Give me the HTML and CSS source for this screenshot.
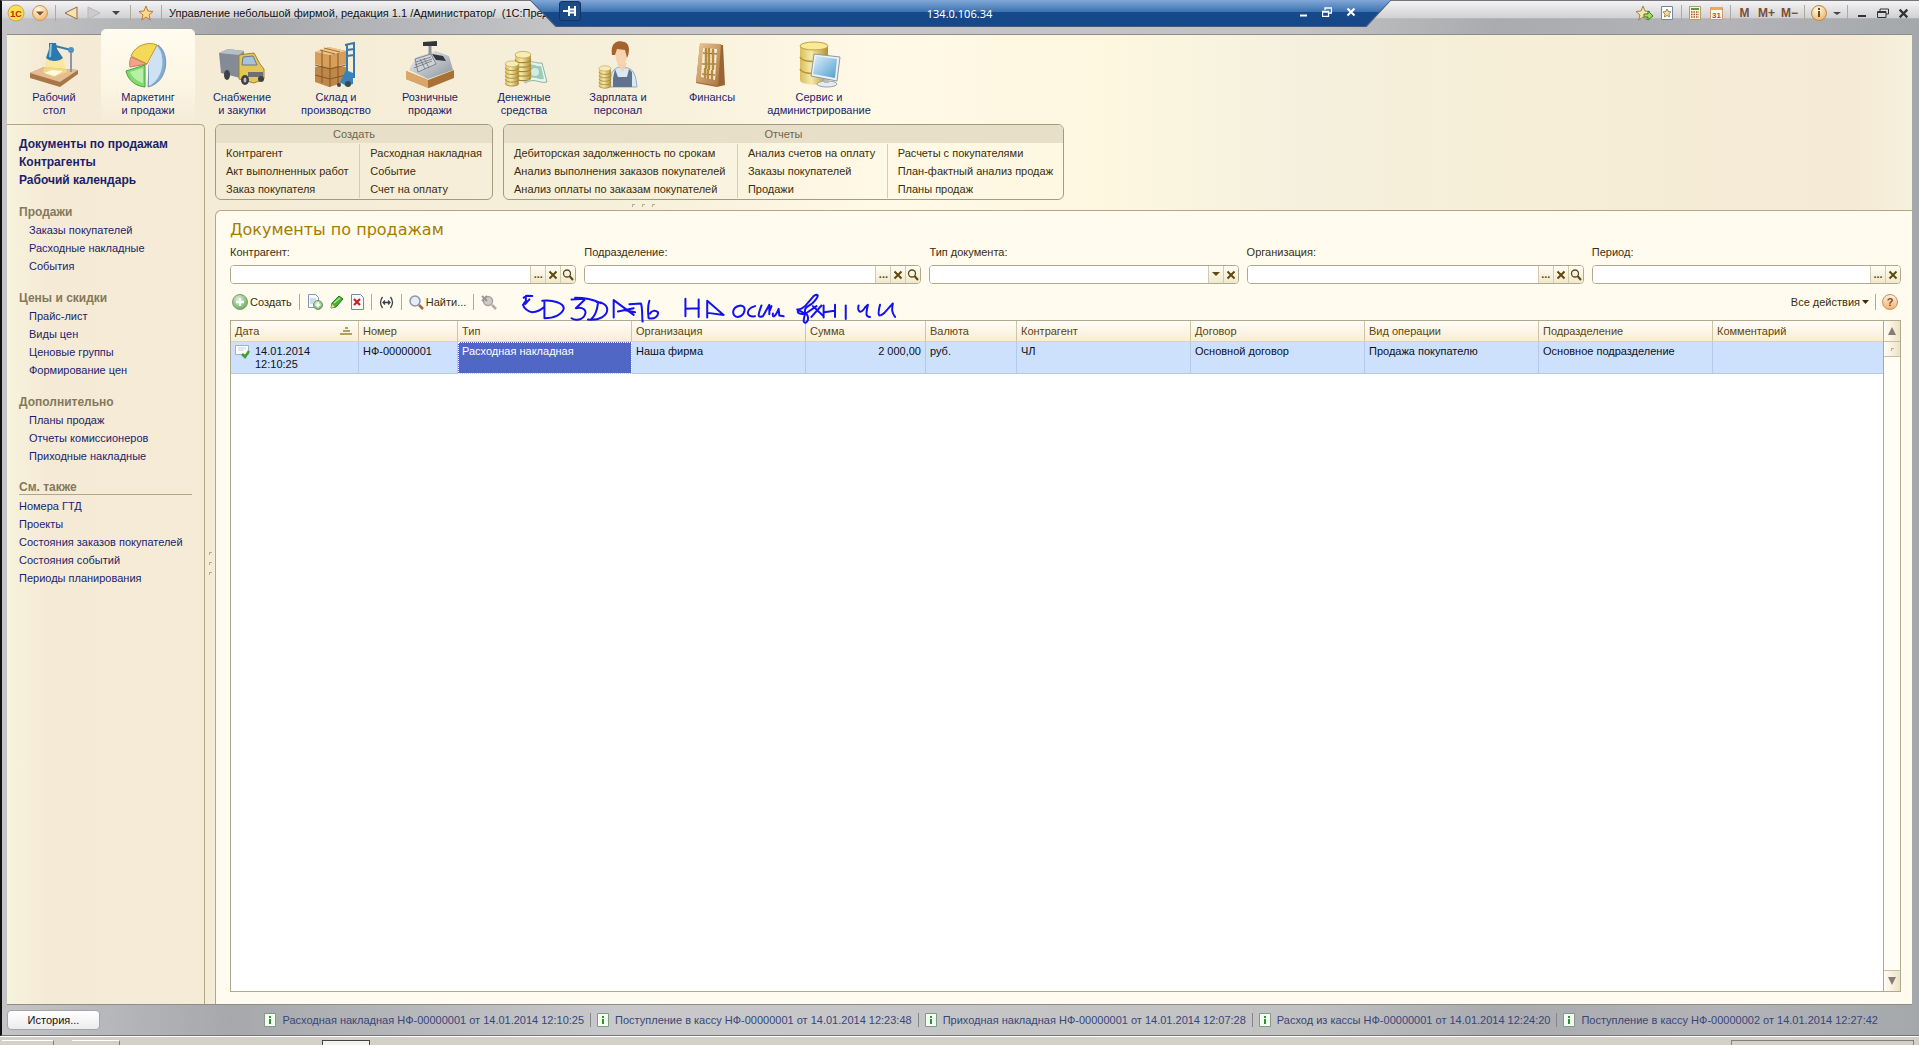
FILE: index.html
```
<!DOCTYPE html>
<html lang="ru">
<head>
    <meta charset="UTF-8">
    <meta name="viewport" content="width=device-width, initial-scale=1.0">
    <title>Управление небольшой фирмой</title>
    <link rel="stylesheet" href="styles.css">
</head>
<body>
    <!-- shared icons -->
    <svg class="defs" width="0" height="0">
        <defs>
            <linearGradient id="gold" x1="0" y1="0" x2="1" y2="0"><stop offset="0" stop-color="#d9bd5c"/><stop offset=".4" stop-color="#f6e9a8"/><stop offset="1" stop-color="#b08f35"/></linearGradient>
            <linearGradient id="wood" x1="0" y1="0" x2="1" y2="1"><stop offset="0" stop-color="#edc795"/><stop offset="1" stop-color="#a8743e"/></linearGradient>
            <linearGradient id="steel" x1="0" y1="0" x2="1" y2="1"><stop offset="0" stop-color="#f2f4f6"/><stop offset="1" stop-color="#8a929b"/></linearGradient>
            <linearGradient id="sky" x1="0" y1="0" x2="1" y2="1"><stop offset="0" stop-color="#e0f1fb"/><stop offset="1" stop-color="#4f9fd0"/></linearGradient>
            <radialGradient id="orange" cx=".4" cy=".3" r=".8"><stop offset="0" stop-color="#fffbe8"/><stop offset="1" stop-color="#f0ad58"/></radialGradient>
            <radialGradient id="green" cx=".4" cy=".3" r=".8"><stop offset="0" stop-color="#d9f0d0"/><stop offset="1" stop-color="#5fa552"/></radialGradient>
        </defs>
        <symbol id="i-x" viewBox="0 0 10 10"><path d="M1.500 1.500l7 7M8.500 1.500l-7 7" stroke="currentColor" stroke-width="2" fill="none"/></symbol>
        <symbol id="i-loupe" viewBox="0 0 12 12"><circle cx="5" cy="4.500" r="3.500" fill="none" stroke="currentColor" stroke-width="1.300"/><path d="M7.500 7l3.500 4" stroke="currentColor" stroke-width="2"/></symbol>
        <symbol id="i-info" viewBox="0 0 12 14"><path d="M.5.500h11v13H.5z" fill="#f4fbf0" stroke="#7f9b86"/><path d="M5 3h2v2H5zM5 6h2v5H5z" fill="#2b9134"/></symbol>
        <symbol id="i-coins" viewBox="0 0 16 28"><path d="M1 4v20c0 4 14 4 14 0V4z" fill="url(#gold)"/><ellipse cx="8" cy="4" rx="7" ry="3" fill="#f7ecb4" stroke="#b3984b" stroke-width=".6"/><path d="M1 8c0 4 14 4 14 0M1 12c0 4 14 4 14 0M1 16c0 4 14 4 14 0M1 20c0 4 14 4 14 0M1 24c0 4 14 4 14 0" fill="none" stroke="#a3853a" stroke-width=".9"/></symbol>
    </svg>

    <div class="window">
        <header class="titlebar">
            <button class="tool" aria-label="Меню 1С"><svg width="18" height="18" viewBox="0 0 18 18"><circle cx="9" cy="9" r="8" fill="#fbe24a" stroke="#c9a26a"/><text x="9" y="12.500" text-anchor="middle" class="logo-text">1С</text></svg></button>
            <button class="tool" aria-label="Главное меню"><svg width="16" height="18" viewBox="0 0 16 18"><circle cx="8" cy="9" r="7.500" fill="url(#orange)" stroke="#c79a66"/><path d="M4 7.500h8l-4 4z" fill="#7a5136"/></svg></button>
            <i class="sep"></i>
            <button class="tool" aria-label="Назад"><svg width="16" height="16" viewBox="0 0 16 16"><path d="M14 2v12L2 8z" fill="#fbe0b0" stroke="#8e6b4c"/></svg></button>
            <button class="tool" aria-label="Вперед"><svg width="16" height="16" viewBox="0 0 16 16"><path d="M2 2v12l12-6z" fill="#cdccca" stroke="#b9b8b6"/></svg></button>
            <button class="tool" aria-label="История переходов"><svg width="10" height="6" viewBox="0 0 10 6"><path d="M1 1h8L5 5z" fill="#444"/></svg></button>
            <i class="sep"></i>
            <button class="tool" aria-label="Избранное"><svg width="16" height="16" viewBox="0 0 16 16"><path d="M8 1l2 5 5 .5-4 3.500 1.300 5L8 12l-4.300 3L5 10 1 6.500 6 6z" fill="#ffd98a" stroke="#b57b3c"/></svg></button>
            <i class="sep"></i>
            <h1 class="app-title">Управление небольшой фирмой, редакция 1.1 /Администратор/&nbsp; (1С:Предприятие)</h1>
            <div class="tools-right">
                <button class="tool" aria-label="Добавить в избранное"><svg width="18" height="16" viewBox="0 0 18 16"><path d="M7 1l2 5 5 .5-4 3.500 1.300 5L7 12l-4.300 3L4 10 0 6.500 5 6z" fill="#f6e6ae" stroke="#9b8546"/><path d="M8 9h4V6l5 5-5 4v-3H8z" fill="#a6dd63" stroke="#3f7b22"/></svg></button>
                <button class="tool" aria-label="Избранное окно"><svg width="12" height="14" viewBox="0 0 12 14"><path d="M.5.500h11v13H.5z" fill="#fff" stroke="#7189a8"/><path d="M6 3l1.200 2.500 2.800.3-2 2 .5 3L6 9.500 3.500 11l.5-3-2-2 2.800-.5z" fill="#ffe0a0" stroke="#8d6a3c" stroke-width=".8"/></svg></button>
                <i class="sep"></i>
                <button class="tool" aria-label="Калькулятор"><svg width="12" height="14" viewBox="0 0 12 14"><path d="M.5.500h11v13H.5z" fill="#fff6dc" stroke="#b39c6b"/><path d="M2 2h8v2H2z" fill="#5b9a43"/><path d="M2 6h8M2 8.500h8M2 11h8" stroke="#a7542b" stroke-width="1.300" stroke-dasharray="1.500 1"/></svg></button>
                <button class="tool" aria-label="Календарь"><svg width="13" height="14" viewBox="0 0 13 14"><path d="M.5 1.500h12v12H.5z" fill="#fffaf0" stroke="#c79a71"/><path d="M1 1h11v3H1z" fill="#f0a662"/><text x="6.500" y="12" text-anchor="middle" class="cal-text">31</text></svg></button>
                <i class="sep"></i>
                <button class="tool mem">M</button>
                <button class="tool mem">M+</button>
                <button class="tool mem">M−</button>
                <i class="sep"></i>
                <button class="tool" aria-label="Справка"><svg width="16" height="16" viewBox="0 0 16 16"><circle cx="8" cy="8" r="7.500" fill="url(#orange)" stroke="#b98a4f"/><path d="M7 3h2v2H7zM7 6h2v6H7z" fill="#6e4a1f"/></svg></button>
                <button class="tool caret" aria-label="Еще"><svg width="8" height="5" viewBox="0 0 8 5"><path d="M0 1h8L4 4z" fill="#444"/></svg></button>
                <i class="sep"></i>
                <button class="tool" aria-label="Свернуть"><svg width="10" height="10" viewBox="0 0 10 10"><path d="M1 8h8" stroke="#333" stroke-width="2"/></svg></button>
                <button class="tool" aria-label="Развернуть"><svg width="12" height="10" viewBox="0 0 12 10"><path d="M3 3V1h8.500v5H9M.5 3.500h8.500v6H.5zM.5 4.500H9" stroke="#333" fill="none"/></svg></button>
                <button class="tool" aria-label="Закрыть"><svg width="11" height="11" class="dark"><use href="#i-x"/></svg></button>
            </div>
        </header>

        <!-- remote desktop bar -->
        <div class="rdp">
            <div class="rdp-body">
                <button class="rdp-pin" aria-label="Закрепить"><svg width="14" height="12" viewBox="0 0 14 12"><path d="M0 6h5M6 1v10M6 4.500h6M6 7.500h6M12 1v10" stroke="#fff" stroke-width="2"/></svg></button>
                <span class="rdp-host">134.0.106.34</span>
                <div class="rdp-controls">
                    <button aria-label="Свернуть"><svg width="9" height="10" viewBox="0 0 9 10"><path d="M1 8.500h7" stroke="#fff" stroke-width="2"/></svg></button>
                    <button aria-label="Окно"><svg width="10" height="10" viewBox="0 0 10 10"><path d="M3 3V1h6.500v5H7M.5 4.500h6v5h-6zM.5 5h6" stroke="#fff" stroke-width="1.300" fill="none"/></svg></button>
                    <button aria-label="Закрыть"><svg width="10" height="10"><use href="#i-x"/></svg></button>
                </div>
            </div>
        </div>

        <div class="desktop">
            <nav class="sections">
                <a href="#">
                    <svg width="48" height="48" viewBox="0 0 48 48"><path d="M0 32l14-6 34 3v4L30 46 0 37z" fill="#a9764a"/><path d="M0 32l14-6 34 3-18 12z" fill="#e5bd92"/><path d="M17 17h16l4 14-14 5-10-5z" fill="#fbe77b" opacity=".6"/><path d="M14 32l8-3 11 1-8 5z" fill="#fffbe0"/><path d="M41 10v21" stroke="#8a97a6" stroke-width="2"/><path d="M25 5l16 4" stroke="#3b7aa8" stroke-width="2"/><path d="M19 2h7l1 6 6 9c-4 4-13 4-17 0l3-9z" fill="#2c79ae"/><path d="M21 3l-1 13" stroke="#8bc3e4" stroke-width="2"/><circle cx="41" cy="9" r="3" fill="#4e92bf"/></svg>
                    <span>Рабочий<br>стол</span>
                </a>
                <a href="#" class="active">
                    <svg width="48" height="48" viewBox="0 0 48 48"><path d="M25 24L34 4c12 8 11 37-10 42z" fill="#86abd0" stroke="#7395b8"/><path d="M25 23L32 4c9 7 10 32-7 41z" fill="#cfe2f4"/><path d="M23 23L7 15C11 4 25 0 33 4z" fill="#f5d959" stroke="#bd9a30"/><path d="M23 23L6 26c-1-4 0-7 1-10z" fill="#f3a487" stroke="#c9795c"/><path d="M21 24v22C11 45 4 39 2 30z" fill="#82dc6d" stroke="#46a040"/><path d="M19 27v15c-6-2-11-6-13-11z" fill="#b9f0a5"/></svg>
                    <span>Маркетинг<br>и продажи</span>
                </a>
                <a href="#">
                    <svg width="48" height="48" viewBox="0 0 48 48"><path d="M1 12l9-4 16 2v28L3 32z" fill="#828b96"/><path d="M1 12l9-4 16 2-5 4z" fill="#b6bec8"/><path d="M21 14l15-2 6 11 4 5v10l-10 4-15-4z" fill="#e5c556" stroke="#9c8436"/><path d="M25 16l10-1 4 9H24z" fill="#a6c3d9" stroke="#6c7782"/><path d="M30 31h15v5H30z" fill="#6d6f73"/><ellipse cx="9" cy="34" rx="3" ry="5" fill="#3d4045"/><ellipse cx="27" cy="39" rx="4" ry="5" fill="#3d4045"/><ellipse cx="27" cy="39" rx="1.500" ry="2.500" fill="#bbb"/><ellipse cx="43" cy="38" rx="3" ry="3" fill="#3d4045"/></svg>
                    <span>Снабжение<br>и закупки</span>
                </a>
                <a href="#">
                    <svg width="48" height="48" viewBox="0 0 48 48"><path d="M3 26l13-3 18 3v15l-17 5-14-5z" fill="#bf8748"/><path d="M3 11l14-5 17 4v13l-16 4-15-4z" fill="#d79e5a"/><path d="M3 11l14-5 17 4-16 4z" fill="#f0c78b"/><path d="M18 14v32M3 24l15 4 16-4M3 34l15 4 16-4M10 9v33M26 12v32" fill="none" stroke="#845626"/><path d="M8 9l15 4M12 7l16 4" stroke="#9c6c34"/><path d="M33 4l9-2v35M35 4v31M35 9l7-1M35 15l7-1" stroke="#3779ac" stroke-width="2" fill="none"/><path d="M28 41l6-12 7 3v11l-7 2z" fill="#3a83ba"/><circle cx="36" cy="43" r="3" fill="#3c4750"/><circle cx="27" cy="44" r="2" fill="#3c4750"/></svg>
                    <span>Склад и<br>производство</span>
                </a>
                <a href="#">
                    <svg width="48" height="48" viewBox="0 0 48 48"><path d="M0 30l22 9 26-10v8L23 47 0 38z" fill="#a87237"/><path d="M0 30l22 9v8L0 38z" fill="#dba668"/><path d="M3 29L10 16l20-6 13 5 4 14-25 9z" fill="url(#steel)"/><path d="M9 18l16-5 5 10-18 8z" fill="#cfd4d8" stroke="#7e858c"/><path d="M10 21l15-5M9 24l17-6M8 27l18-7M14 18l5 10M18 17l5 10" stroke="#6c737b" stroke-width=".8"/><path d="M26 13l11 2 3 5-10-1z" fill="#32373c"/><path d="M24 5v8" stroke="#8d949c" stroke-width="3"/><path d="M17 1l14-1v5H17z" fill="#31363c"/></svg>
                    <span>Розничные<br>продажи</span>
                </a>
                <a href="#">
                    <svg width="48" height="48" viewBox="0 0 48 48"><path d="M24 23c7-5 12 0 18-1l5 19c-8 2-12-5-22 1z" fill="#e8f4ee" stroke="#8eb2a3"/><path d="M25 25c7-4 11 1 16 0l3 13c-7 1-10-4-18 0z" fill="#9ccbb9"/><ellipse cx="35" cy="31" rx="4" ry="4" fill="#d5ebe0"/><use href="#i-coins" x="14" y="7" width="18" height="36"/><use href="#i-coins" x="3" y="19" width="18" height="27"/></svg>
                    <span>Денежные<br>средства</span>
                </a>
                <a href="#">
                    <svg width="48" height="48" viewBox="0 0 48 48"><path d="M16 46c0-14 3-19 10-20l8 1c6 2 8 8 9 19z" fill="#d9e8f5" stroke="#95adc3"/><path d="M21 28l3 8h9l2-8 3 3v15H19v-9z" fill="#60738b"/><path d="M23 23l6 8 4-9z" fill="#f5cfae"/><path d="M21 9c0-5 12-5 12 2 0 8-2 14-6 14s-6-8-6-16z" fill="#f7d3b2"/><path d="M18 14C16 1 24-1 30 1c6 1 6 10 3 16l-2-8-8-1-2 6z" fill="#a8622d"/><use href="#i-coins" x="3" y="24" width="16" height="24"/></svg>
                    <span>Зарплата и<br>персонал</span>
                </a>
                <a href="#">
                    <svg width="48" height="48" viewBox="0 0 48 48"><path d="M12 3l23 1 2 40-8 2-21-4z" fill="#9a6535"/><path d="M12 2l21 1-3 42-22-4z" fill="url(#wood)"/><path d="M15 7l14 1-2 31-14-3z" fill="#f7ecd1"/><path d="M15 12l14 1M14 23h14M14 33l13 1" stroke="#745023"/><path d="M18 8v9M21 8v9M25 9v9M18 18v9M21 18v10M25 19v9M17 28v8M20 29v8M24 30v8" stroke="#b68b3f" stroke-width="2.500" stroke-linecap="round"/></svg>
                    <span>Финансы</span>
                </a>
                <a href="#">
                    <svg width="48" height="48" viewBox="0 0 48 48"><path d="M5 5v34c0 6 28 6 28 0V5z" fill="url(#gold)"/><ellipse cx="19" cy="5" rx="14" ry="4" fill="#f9ea93" stroke="#bfa045"/><path d="M5 16c2 6 26 6 28 0M5 28c2 6 26 6 28 0" fill="none" stroke="#b6943b" stroke-width="1.500"/><ellipse cx="32" cy="43" rx="10" ry="3" fill="#e6ebef" stroke="#99a5af"/><path d="M29 37h5v5h-5z" fill="#b2bcc4"/><path d="M19 13l26 3-3 24-26-5z" fill="#eef2f5" stroke="#8c99a4"/><path d="M21 15l21 3-2 19-22-4z" fill="url(#sky)"/></svg>
                    <span>Сервис и<br>администрирование</span>
                </a>
            </nav>

            <div class="main">
                <aside class="nav">
                    <ul class="nav-top">
                        <li><a href="#">Документы по продажам</a></li>
                        <li><a href="#">Контрагенты</a></li>
                        <li><a href="#">Рабочий календарь</a></li>
                    </ul>
                    <h2>Продажи</h2>
                    <ul>
                        <li><a href="#">Заказы покупателей</a></li>
                        <li><a href="#">Расходные накладные</a></li>
                        <li><a href="#">События</a></li>
                    </ul>
                    <h2>Цены и скидки</h2>
                    <ul>
                        <li><a href="#">Прайс-лист</a></li>
                        <li><a href="#">Виды цен</a></li>
                        <li><a href="#">Ценовые группы</a></li>
                        <li><a href="#">Формирование цен</a></li>
                    </ul>
                    <h2>Дополнительно</h2>
                    <ul>
                        <li><a href="#">Планы продаж</a></li>
                        <li><a href="#">Отчеты комиссионеров</a></li>
                        <li><a href="#">Приходные накладные</a></li>
                    </ul>
                    <h2 class="underlined">См. также</h2>
                    <ul class="flat">
                        <li><a href="#">Номера ГТД</a></li>
                        <li><a href="#">Проекты</a></li>
                        <li><a href="#">Состояния заказов покупателей</a></li>
                        <li><a href="#">Состояния событий</a></li>
                        <li><a href="#">Периоды планирования</a></li>
                    </ul>
                </aside>
                <div class="splitter"><i></i><i></i><i></i></div>

                <div class="workspace">
                    <div class="panels">
                        <section class="panel create">
                            <h2>Создать</h2>
                            <div class="panel-cols">
                                <ul>
                                    <li><a href="#">Контрагент</a></li>
                                    <li><a href="#">Акт выполненных работ</a></li>
                                    <li><a href="#">Заказ покупателя</a></li>
                                </ul>
                                <ul>
                                    <li><a href="#">Расходная накладная</a></li>
                                    <li><a href="#">Событие</a></li>
                                    <li><a href="#">Счет на оплату</a></li>
                                </ul>
                            </div>
                        </section>
                        <section class="panel reports">
                            <h2>Отчеты</h2>
                            <div class="panel-cols">
                                <ul>
                                    <li><a href="#">Дебиторская задолженность по срокам</a></li>
                                    <li><a href="#">Анализ выполнения заказов покупателей</a></li>
                                    <li><a href="#">Анализ оплаты по заказам покупателей</a></li>
                                </ul>
                                <ul>
                                    <li><a href="#">Анализ счетов на оплату</a></li>
                                    <li><a href="#">Заказы покупателей</a></li>
                                    <li><a href="#">Продажи</a></li>
                                </ul>
                                <ul>
                                    <li><a href="#">Расчеты с покупателями</a></li>
                                    <li><a href="#">План-фактный анализ продаж</a></li>
                                    <li><a href="#">Планы продаж</a></li>
                                </ul>
                            </div>
                        </section>
                    </div>
                    <div class="grip"><i></i><i></i><i></i></div>

                    <main class="content">
                        <h2 class="content-title">Документы по продажам</h2>

                        <form class="filters">
                            <div class="field wide">
                                <label for="partner">Контрагент:</label>
                                <div class="box">
                                    <input type="text" id="partner">
                                    <button type="button" aria-label="Выбрать">...</button>
                                    <button type="button" aria-label="Очистить"><svg width="10" height="10"><use href="#i-x"/></svg></button>
                                    <button type="button" aria-label="Открыть"><svg width="12" height="12"><use href="#i-loupe"/></svg></button>
                                </div>
                            </div>
                            <div class="field">
                                <label for="department">Подразделение:</label>
                                <div class="box">
                                    <input type="text" id="department">
                                    <button type="button" aria-label="Выбрать">...</button>
                                    <button type="button" aria-label="Очистить"><svg width="10" height="10"><use href="#i-x"/></svg></button>
                                    <button type="button" aria-label="Открыть"><svg width="12" height="12"><use href="#i-loupe"/></svg></button>
                                </div>
                            </div>
                            <div class="field narrow">
                                <label for="doctype">Тип документа:</label>
                                <div class="box">
                                    <select id="doctype"><option></option><option>Расходная накладная</option></select>
                                    <button type="button" aria-label="Список"><svg width="8" height="5" viewBox="0 0 8 5"><path d="M0 0h8L4 4z" fill="#5c4a10"/></svg></button>
                                    <button type="button" aria-label="Очистить"><svg width="10" height="10"><use href="#i-x"/></svg></button>
                                </div>
                            </div>
                            <div class="field">
                                <label for="company">Организация:</label>
                                <div class="box">
                                    <input type="text" id="company">
                                    <button type="button" aria-label="Выбрать">...</button>
                                    <button type="button" aria-label="Очистить"><svg width="10" height="10"><use href="#i-x"/></svg></button>
                                    <button type="button" aria-label="Открыть"><svg width="12" height="12"><use href="#i-loupe"/></svg></button>
                                </div>
                            </div>
                            <div class="field narrow">
                                <label for="period">Период:</label>
                                <div class="box">
                                    <input type="text" id="period">
                                    <button type="button" aria-label="Выбрать">...</button>
                                    <button type="button" aria-label="Очистить"><svg width="10" height="10"><use href="#i-x"/></svg></button>
                                </div>
                            </div>
                        </form>

                        <div class="toolbar">
                            <button class="cmd"><svg width="16" height="16" viewBox="0 0 16 16"><circle cx="8" cy="8" r="7.500" fill="url(#green)" stroke="#7d9c76"/><path d="M8 4v8M4 8h8" stroke="#fff" stroke-width="2.500"/></svg>Создать</button>
                            <i class="sep"></i>
                            <button class="cmd" aria-label="Скопировать"><svg width="16" height="16" viewBox="0 0 16 16"><path d="M1.500.500h7l3 3v10h-10z" fill="#f8fbff" stroke="#7f97b5"/><path d="M3 5h6M3 7h6M3 9h4" stroke="#a9bdd4"/><circle cx="11" cy="11" r="4.500" fill="url(#green)" stroke="#6f946a"/><path d="M11 8.500v5M8.500 11h5" stroke="#fff" stroke-width="1.500"/></svg></button>
                            <button class="cmd" aria-label="Изменить"><svg width="14" height="14" viewBox="0 0 14 14"><path d="M1 13l1-5 7-7 4 3-7 8z" fill="#46b52c" stroke="#24771b"/><path d="M4 8l6-5" stroke="#a8e690" stroke-width="1.500"/><path d="M1 13l1-4 3 3z" fill="#f0d49a"/></svg></button>
                            <button class="cmd" aria-label="Пометить на удаление"><svg width="13" height="16" viewBox="0 0 13 16"><path d="M.5.500h9l3 3v12H.5z" fill="#f8fbff" stroke="#7189ad"/><path d="M3 5l6 6M9 5l-6 6" stroke="#c32222" stroke-width="2.200"/></svg></button>
                            <i class="sep"></i>
                            <button class="cmd" aria-label="Интервал"><svg width="15" height="13" viewBox="0 0 15 13"><path d="M3.500 1Q-.5 6.500 3.500 12M11.500 1q4 5.500 0 11M4 6.500h7M6 4.500l-2 2 2 2M9 4.500l2 2-2 2" fill="none" stroke="#3c4448" stroke-width="1.300"/></svg></button>
                            <i class="sep"></i>
                            <button class="cmd"><svg width="15" height="15" viewBox="0 0 15 15"><circle cx="6" cy="6" r="5" fill="#e4eefa" stroke="#8b94a8" stroke-width="1.500"/><path d="M10 10l4 4" stroke="#a5693f" stroke-width="2.500"/></svg>Найти...</button>
                            <i class="sep"></i>
                            <button class="cmd" aria-label="Отменить поиск"><svg width="16" height="15" viewBox="0 0 16 15"><circle cx="7" cy="6" r="4.500" fill="#cfcac6" stroke="#aaa5a4" stroke-width="1.500"/><path d="M11 10l4 4" stroke="#b0a9a4" stroke-width="2.500"/><path d="M1 1l5 5M6 1L1 6" stroke="#9d9496" stroke-width="2"/></svg></button>
                            <div class="toolbar-end">
                                <button class="cmd">Все действия<svg width="7" height="4" viewBox="0 0 7 4"><path d="M0 0h7L3.500 4z" fill="#3b2e0c"/></svg></button>
                                <i class="sep"></i>
                                <button class="cmd help" aria-label="Справка">?</button>
                            </div>
                            <!-- pen note -->
                            <svg class="note" width="382" height="37" viewBox="50 180 1070 110" preserveAspectRatio="none">
                                <path d="M90 198l-14-1-10 6M72 198v14l-8 12c2 10 14 20 26 22 14 0 26-8 34-16M82 208l-12 14M124 216v46M118 212c30-4 62 8 60 24-4 16-26 28-54 28M200 208l34-2M210 203c30 0 52 6 72 16M236 210l-24 24c22-4 30 6 26 18-6 18-28 20-38 12M274 220c-2 18-6 36-20 48M246 268c32 4 54-12 54-30 0-12-12-22-30-22M318 262v-52l56 44M330 244l44-10M350 240l28 6M362 222l32-2M395 222c4 16 2 34 4 52M418 212c-6 18-4 36-2 52 16 4 28-6 26-18-8-8-18-4-22 4M519 206v52M519 236l38-2M556 208v52M580 262v-50l46 42-44-6M674 226c-28 4-26 34-8 34 20-4 26-32 8-34M714 228c-26 8-28 34 0 30M732 226c-12 34-10 36 4 32l18-34v28M756 240l4-12M764 250c-2 16 8 8 16-14l2 20 12 2M832 238c10 0 22-8 30-20l16-20c16-10 16 2-4 22-16 12-22 12-20 28l-4 24c2 14 18 0 10-18l-24-14c-8 8 6 14 20 10l30-22M872 260l28-34M876 228l30 30M906 226v36M908 246l28-4M938 224v36M968 226v40M1004 226c-4 20 6 26 18 6l8-8c-6 30-6 36 6 36M1064 224c-8 34-4 40 14 22l22-26c-4 20-2 28 6 40"/>
                            </svg>
                        </div>

                        <div class="grid">
                            <div class="grid-body">
                                <table>
                                    <colgroup>
                                        <col class="c-date"><col class="c-num"><col class="c-wide"><col class="c-wide"><col class="c-sum"><col class="c-cur">
                                        <col class="c-wide"><col class="c-wide"><col class="c-wide"><col class="c-wide"><col class="c-wide">
                                    </colgroup>
                                    <thead>
                                        <tr>
                                            <th>Дата<svg class="sort" width="12" height="8" viewBox="0 0 12 8"><path d="M5 1h3M3 4h7M0 7h12" stroke="#b0a065" stroke-width="2"/></svg></th>
                                            <th>Номер</th>
                                            <th>Тип</th>
                                            <th>Организация</th>
                                            <th>Сумма</th>
                                            <th>Валюта</th>
                                            <th>Контрагент</th>
                                            <th>Договор</th>
                                            <th>Вид операции</th>
                                            <th>Подразделение</th>
                                            <th>Комментарий</th>
                                        </tr>
                                    </thead>
                                    <tbody>
                                        <tr>
                                            <td><div class="date"><svg width="15" height="14" viewBox="0 0 15 14"><path d="M.5.500h13v9H.5z" fill="#fff" stroke="#9fb3c8"/><path d="M3 3h8M3 5h6" stroke="#c2cedb"/><path d="M7 9l3 3 4-6" stroke="#43a02e" stroke-width="2.500" fill="none"/></svg><span>14.01.2014 12:10:25</span></div></td>
                                            <td>НФ-00000001</td>
                                            <td class="current">Расходная накладная</td>
                                            <td>Наша фирма</td>
                                            <td class="number">2 000,00</td>
                                            <td>руб.</td>
                                            <td>ЧЛ</td>
                                            <td>Основной договор</td>
                                            <td>Продажа покупателю</td>
                                            <td>Основное подразделение</td>
                                            <td></td>
                                        </tr>
                                    </tbody>
                                </table>
                            </div>
                            <div class="scrollbar">
                                <button class="up" aria-label="Вверх"><svg width="8" height="8" viewBox="0 0 8 8"><path d="M4 0l4 8H0z" fill="#857d70"/></svg></button>
                                <div class="thumb"><i></i></div>
                                <button class="down" aria-label="Вниз"><svg width="8" height="8" viewBox="0 0 8 8"><path d="M0 0h8L4 8z" fill="#857d70"/></svg></button>
                            </div>
                        </div>
                    </main>
                </div>
            </div>
        </div>

        <footer class="status">
            <button class="history">История...</button>
            <ul>
                <li><a href="#"><svg width="12" height="14"><use href="#i-info"/></svg>Расходная накладная НФ-00000001 от 14.01.2014 12:10:25</a></li>
                <li><a href="#"><svg width="12" height="14"><use href="#i-info"/></svg>Поступление в кассу НФ-00000001 от 14.01.2014 12:23:48</a></li>
                <li><a href="#"><svg width="12" height="14"><use href="#i-info"/></svg>Приходная накладная НФ-00000001 от 14.01.2014 12:07:28</a></li>
                <li><a href="#"><svg width="12" height="14"><use href="#i-info"/></svg>Расход из кассы НФ-00000001 от 14.01.2014 12:24:20</a></li>
                <li><a href="#"><svg width="12" height="14"><use href="#i-info"/></svg>Поступление в кассу НФ-00000002 от 14.01.2014 12:27:42</a></li>
            </ul>
        </footer>
    </div>

    <div class="taskbar">
        <i class="task start"></i>
        <i class="task"></i>
        <i class="task pressed"></i>
        <i class="tray"></i>
    </div>
</body>
</html>
```
FILE: styles.css
```
* {
    box-sizing: border-box;
}

body {
    margin: 0;
    min-height: 100vh;
    display: flex;
    flex-direction: column;
    background: #d4d0c8;
    color: #3b2e0c;
    font-family: "Liberation Sans", Arial, sans-serif;
    font-size: 11px;
    line-height: 13px;
}

ul {
    list-style: none;
    margin: 0;
    padding: 0;
}

h1, h2 {
    margin: 0;
    font-size: 11px;
    font-weight: normal;
}

a {
    color: #1b1f6b;
    text-decoration: none;
}

a:hover {
    text-decoration: underline;
}

button {
    font: inherit;
    color: inherit;
    background: none;
    border: 0;
    padding: 0;
    cursor: pointer;
}

.defs {
    position: absolute;
}

.window {
    flex: 1;
    display: flex;
    flex-direction: column;
    position: relative;
    padding: 0 7px 0 5px;
    border-left: 2px solid #111;
    border-top: 1px solid #77757a;
    border-bottom: 1px solid #77757a;
    background: linear-gradient(90deg, #c4c4c6, #a6a8ac 12%, #c9c9cb 32%, #c2c2c3 68%, #a9abae 78%, #b4b4b8 90%, #a4a8aa);
}

/* title bar */
.titlebar {
    display: flex;
    align-items: center;
    gap: 7px;
    height: 33px;
    margin: 0 -7px 0 -5px;
    padding: 0 8px 9px 5px;
    background: linear-gradient(#f4f4f5, #d2d2d4 50%, #b9b9bc00 54%);
}

.tool {
    display: flex;
    align-items: center;
    justify-content: center;
    min-width: 14px;
    height: 18px;
}

.sep {
    width: 1px;
    height: 16px;
    background: #b0aa9e;
}

.app-title {
    flex: 1;
    color: #111;
    white-space: nowrap;
    overflow: hidden;
}

.tools-right {
    display: flex;
    align-items: center;
    gap: 6px;
}

.tools-right .tool {
    min-width: 15px;
}

.tools-right .caret {
    min-width: 8px;
}

.mem {
    color: #7a4f31;
    font-size: 12px;
    font-weight: bold;
}

.dark {
    color: #333;
}

.logo-text {
    font: bold 9px "Liberation Sans", sans-serif;
    fill: #c8210f;
}

.cal-text {
    font: bold 8px "Liberation Sans", sans-serif;
    fill: #d13c1c;
}

.rdp {
    position: absolute;
    top: -1px;
    left: 50%;
    width: 862px;
    transform: translateX(-50%);
    padding: 0 1px 1px;
    background: #4a5878;
    clip-path: polygon(0 0, 100% 0, 837px 100%, 26px 100%);
}

.rdp-body {
    position: relative;
    display: flex;
    align-items: center;
    height: 26px;
    background: linear-gradient(#82a7d8, #3c73b0 45%, #164a8c 46%, #174787);
    color: #fff;
    clip-path: polygon(0 0, 100% 0, 835px 100%, 26px 100%);
}

.rdp-pin {
    display: flex;
    align-items: center;
    justify-content: center;
    width: 22px;
    height: 20px;
    margin: 0 0 4px 28px;
    border: 1px solid #17335e;
    border-radius: 3px;
    background: #1c4c86;
}

.rdp-host {
    flex: 1;
    padding-left: 40px;
    text-align: center;
    font-family: "Noto Sans", sans-serif;
    font-size: 11px;
}

.rdp-controls {
    display: flex;
    gap: 14px;
    padding-right: 35px;
}

/* sections */
.desktop {
    flex: 1;
    display: flex;
    flex-direction: column;
    border-top: 1px solid #8f8d88;
    background: linear-gradient(90deg, #f7f3dc, #f5ead6 2%, #f5ecd6 12%, #f6efd9 32%, #fff9e6 46%, #fdf7e0 58%, #f5f0dd 68%, #f6eed6 80%, #f5ead6 97%, #f6f1dc);
}

.sections {
    display: flex;
    height: 89px;
}

.sections a {
    display: flex;
    flex-direction: column;
    align-items: center;
    width: 94px;
    padding-top: 6px;
    gap: 2px;
    text-align: center;
}

.sections a:last-child {
    width: 120px;
}

.sections .active {
    margin-top: -6px;
    padding-top: 12px;
    border-radius: 5px 5px 0 0;
    background: linear-gradient(#fffcf0, #fcf5e3 60%, #f6ecd700);
}

/* left navigation */
.main {
    flex: 1;
    display: flex;
}

.nav {
    width: 198px;
    padding: 10px 12px;
    border: 1px solid #b3a684;
    border-width: 1px 1px 0 0;
    border-top-right-radius: 5px;
}

.nav li,
.nav h2 {
    line-height: 18px;
    white-space: nowrap;
}

.nav ul {
    padding-left: 10px;
}

.nav .flat,
.nav .nav-top {
    padding-left: 0;
}

.nav-top a {
    font-size: 12px;
    font-weight: bold;
}

.nav h2 {
    margin-top: 14px;
    color: #85795a;
    font-size: 12px;
    font-weight: bold;
}

.nav .underlined {
    height: 16px;
    margin-bottom: 2px;
    line-height: 16px;
    border-bottom: 1px solid #b3a684;
}

.splitter {
    display: flex;
    flex-direction: column;
    align-items: center;
    gap: 7px;
    width: 10px;
    padding-top: 428px;
}

.splitter i,
.grip i,
.thumb i {
    width: 3px;
    height: 3px;
    border: 1px solid #b8ad92;
    border-width: 1px 0 0 1px;
}

/* command panels */
.workspace {
    flex: 1;
    min-width: 0;
    display: flex;
    flex-direction: column;
}

.panels {
    display: flex;
    gap: 10px;
}

.panel {
    width: 278px;
    height: 76px;
    border: 1px solid #a39b80;
    border-radius: 6px;
    overflow: hidden;
}

.panel.reports {
    width: 561px;
}

.panel h2 {
    height: 18px;
    line-height: 18px;
    text-align: center;
    color: #6d6650;
    background: #e7dfc7;
}

.panel-cols {
    display: flex;
    justify-content: space-between;
    padding: 1px 10px;
}

.panel-cols ul + ul {
    padding-left: 10px;
    border-left: 1px solid #d6ccb0;
}

.panel li {
    line-height: 18px;
    white-space: nowrap;
}

.panel a {
    color: #3b2e0c;
}

.grip {
    display: flex;
    gap: 7px;
    height: 10px;
    padding: 4px 0 0 417px;
}

/* content */
.content {
    flex: 1;
    display: flex;
    flex-direction: column;
    padding: 8px 11px 12px 14px;
    border: 1px solid #b3a684;
    border-width: 1px 0 0 1px;
    border-top-left-radius: 6px;
    background: #fffbee;
}

.content-title {
    color: #a67c00;
    font-family: "DejaVu Sans", sans-serif;
    font-size: 16px;
    line-height: 22px;
}

.filters {
    display: flex;
    gap: 8px;
}

.field {
    flex: 337 1 0;
}

.field.wide {
    flex-grow: 346;
}

.field.narrow {
    flex-grow: 309;
}

.field label {
    display: block;
    margin: 5px 0 6px;
}

.box {
    display: flex;
    height: 19px;
    border: 1px solid #b0a98c;
    border-radius: 4px;
    background: #fff;
    overflow: hidden;
}

.box input,
.box select {
    flex: 1;
    min-width: 0;
    border: 0;
    padding: 0 4px;
    background: #fff;
    font: inherit;
    appearance: none;
    outline: none;
}

.box button {
    display: flex;
    align-items: center;
    justify-content: center;
    width: 15px;
    border-left: 1px solid #d3cbb0;
    background: linear-gradient(#fffdf5, #f1e8cd);
    color: #5c4a10;
    font-weight: bold;
}

.toolbar {
    position: relative;
    display: flex;
    align-items: center;
    gap: 7px;
    height: 36px;
    padding-left: 2px;
}

.cmd {
    display: flex;
    align-items: center;
    gap: 2px;
}

.toolbar-end {
    display: flex;
    align-items: center;
    gap: 6px;
    margin-left: auto;
    padding-right: 3px;
}

.help {
    justify-content: center;
    width: 16px;
    height: 16px;
    border: 1px solid #c58f62;
    border-radius: 50%;
    background: linear-gradient(#fff0dc, #f2b274);
    color: #8a4b1d;
    font-weight: bold;
}

.note {
    position: absolute;
    left: 288px;
    top: 6px;
    pointer-events: none;
}

.note path {
    fill: none;
    stroke: #1212f0;
    stroke-width: 2;
    stroke-linecap: round;
    stroke-linejoin: round;
    vector-effect: non-scaling-stroke;
}

/* document list */
.grid {
    flex: 1;
    display: flex;
    border: 1px solid #b0a98c;
    background: #fff;
}

.grid-body {
    flex: 1;
    min-width: 0;
}

table {
    width: 100%;
    table-layout: fixed;
    border-collapse: separate;
    border-spacing: 0;
}

.c-date { width: 128px; }
.c-num { width: 99px; }
.c-wide { width: 174px; }
.c-sum { width: 120px; }
.c-cur { width: 91px; }

th {
    height: 21px;
    padding: 0 4px;
    text-align: left;
    font-weight: normal;
    color: #5a4610;
    border-right: 1px solid #cfc5a4;
    border-bottom: 1px solid #ddd3b5;
    background: linear-gradient(#fffdf8, #f9edd5);
}

.sort {
    float: right;
    margin: 2px 2px 0 0;
}

td {
    height: 32px;
    padding: 3px 4px 0;
    vertical-align: top;
    color: #101020;
    background: #cde1fd;
    border-right: 1px solid #b3cbe8;
    border-bottom: 1px solid #b3cbe8;
}

td.current {
    background: #5067c5;
    color: #fff;
    outline: 1px dotted #fff;
    outline-offset: -1px;
}

td.number {
    text-align: right;
}

.date {
    display: flex;
    gap: 5px;
}

.date span {
    width: 60px;
}

.date svg {
    flex: none;
}

.scrollbar {
    display: flex;
    flex-direction: column;
    width: 17px;
    border-left: 1px solid #b0a98c;
    background: #fffdf6;
}

.scrollbar button,
.thumb {
    display: flex;
    align-items: center;
    justify-content: center;
    height: 21px;
    border-bottom: 1px solid #c9bf9d;
    background: linear-gradient(90deg, #fffdf5, #ece3c6);
}

.thumb {
    height: 15px;
}

.scrollbar .down {
    margin-top: auto;
    border-top: 1px solid #c9bf9d;
    border-bottom: 0;
}

/* history line */
.status {
    display: flex;
    align-items: center;
    justify-content: space-between;
    height: 31px;
    border-top: 1px solid #8f8d88;
}

.history {
    width: 93px;
    height: 20px;
    border: 1px solid #a5a5a8;
    border-radius: 4px;
    background: linear-gradient(#fff, #ececee);
    color: #111;
}

.status ul {
    display: flex;
    padding-right: 34px;
}

.status li + li {
    margin-left: 6px;
    padding-left: 6px;
    border-left: 1px solid #85858c;
}

.status a {
    display: flex;
    align-items: center;
    gap: 6px;
    color: #37467c;
    white-space: nowrap;
}

/* top edge of the system task bar */
.taskbar {
    display: flex;
    gap: 18px;
    height: 9px;
    padding: 3px 5px 0 2px;
    border-top: 1px solid #fff;
}

.task {
    width: 48px;
    border: 1px solid #808080;
    border-width: 0 1px 0 0;
    border-top: 1px solid #fff;
}

.task.start {
    width: 52px;
}

.task.pressed {
    margin-left: 184px;
    border: 1px solid #444;
    border-bottom: 0;
    background: #f4f3f0;
}

.tray {
    width: 183px;
    margin-left: auto;
    border: 1px solid #808080;
    border-bottom: 0;
}
```
